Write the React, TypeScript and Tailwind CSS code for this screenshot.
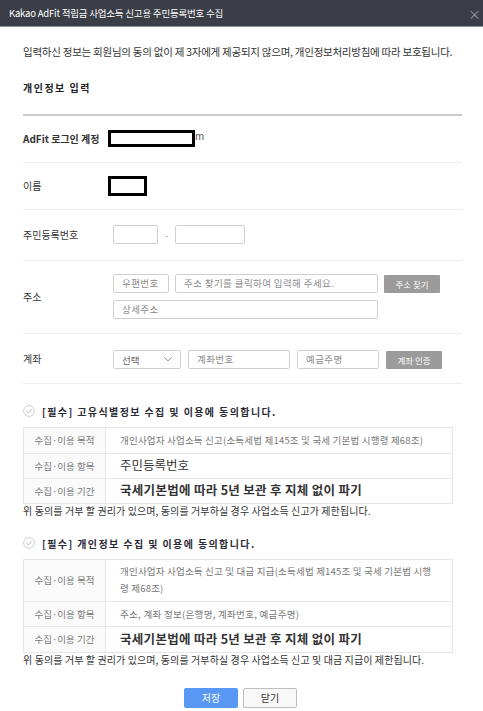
const font = { fontFamily: '"Noto Sans CJK KR", "Noto Sans", sans-serif' };

function CheckCircle() {
  return (
    <svg width="12" height="12" viewBox="0 0 12 12" className="shrink-0">
      <circle cx="6" cy="6" r="5.4" fill="white" stroke="#cfcfcf" strokeWidth="1" />
      <path d="M3.4 6.1 L5.3 7.9 L8.7 4.3" fill="none" stroke="#b5b5b5" strokeWidth="1" />
    </svg>
  );
}

function Input({ w, text }: { w: string; text?: string }) {
  return (
    <div className={`${w} h-[19px] border border-[#cfcfcf] rounded-[2px] bg-white flex items-center px-[8px] text-[9.5px] tracking-[0.4px] text-[#8a8a8a] leading-none whitespace-nowrap`}>
      {text}
    </div>
  );
}

function GrayBtn({ label }: { label: string }) {
  return (
    <div className="w-[56px] h-[18px] bg-[#9b9b9b] rounded-[1px] flex items-center justify-center text-[8.5px] text-white leading-none">
      {label}
    </div>
  );
}

function Row({ label, bold, h, children }: { label: string; bold?: boolean; h: string; children: React.ReactNode }) {
  return (
    <div className={`flex items-center ${h} border-b border-[#ededed]`}>
      <div className={`w-[90px] shrink-0 text-[10px] text-[#333] ${bold ? "font-bold" : ""}`}>{label}</div>
      <div className="flex-1">{children}</div>
    </div>
  );
}

function ConsentTable({ rows }: { rows: { label: string; h: string; content: React.ReactNode }[] }) {
  return (
    <div className="border border-[#e6e6e6] w-[430px]">
      {rows.map((r, i) => (
        <div key={i} className={`flex ${r.h} ${i > 0 ? "border-t border-[#e6e6e6]" : ""}`}>
          <div className="w-[82px] shrink-0 bg-[#fafafa] border-r border-[#e6e6e6] flex items-center justify-center text-[9.5px] text-[#777]">
            {r.label}
          </div>
          <div className="flex-1 flex items-center pl-[14px] pr-[14px]">{r.content}</div>
        </div>
      ))}
    </div>
  );
}

export default function App() {
  return (
    <div style={font} className="w-[483px] h-[711px] bg-white overflow-hidden">
      {/* header */}
      <div className="h-[27px] bg-[#3b3e47] border-b border-[#8f9197] flex items-center justify-between pl-[9px] pr-[2px]">
        <span className="text-[9.5px] text-white tracking-[-0.2px]">Kakao AdFit 적립금 사업소득 신고용 주민등록번호 수집</span>
        <span className="text-[13px] text-[#9a9ca3] leading-none">×</span>
      </div>

      <div className="pl-[23px] pr-[21px]">
        <p className="mt-[17px] text-[10.5px] text-[#333] tracking-[-0.25px]">
          입력하신 정보는 회원님의 동의 없이 제 3자에게 제공되지 않으며, 개인정보처리방침에 따라 보호됩니다.
        </p>
        <h2 className="mt-[20px] text-[10px] font-bold text-[#222] tracking-[1.5px]">개인정보 입력</h2>
        <div className="mt-[19px] h-[2px] bg-[#cacaca]" />

        <Row label="AdFit 로그인 계정" bold h="h-[47px]">
          <div className="flex items-end -ml-[5px]">
            <div className="w-[87px] h-[17px] border-[3px] border-black bg-white" />
            <span className="text-[10px] text-[#555] leading-none mb-[6px]">m</span>
          </div>
        </Row>
        <Row label="이름" h="h-[47px]">
          <div className="w-[39px] h-[20px] border-[3px] border-black bg-white -ml-[5px]" />
        </Row>
        <Row label="주민등록번호" h="h-[51px]">
          <div className="flex items-center gap-[7px]">
            <Input w="w-[45px]" />
            <span className="text-[10px] text-[#aaa]">-</span>
            <Input w="w-[70px]" />
          </div>
        </Row>
        <Row label="주소" h="h-[73px]">
          <div className="flex flex-col gap-[7px]">
            <div className="flex items-center gap-[6px]">
              <Input w="w-[56px]" text="우편번호" />
              <Input w="w-[203px]" text="주소 찾기를 클릭하여 입력해 주세요." />
              <GrayBtn label="주소 찾기" />
            </div>
            <Input w="w-[265px]" text="상세주소" />
          </div>
        </Row>
        <Row label="계좌" h="h-[50px]">
          <div className="flex items-center gap-[7px] mt-[3px]">
            <div className="w-[68px] h-[19px] border border-[#cfcfcf] rounded-[2px] flex items-center justify-between px-[8px] text-[9.5px] text-[#666]">
              <span>선택</span>
              <svg width="8" height="5" viewBox="0 0 8 5"><path d="M0.5 0.5 L4 4 L7.5 0.5" fill="none" stroke="#999" strokeWidth="1" /></svg>
            </div>
            <Input w="w-[102px]" text="계좌번호" />
            <Input w="w-[82px]" text="예금주명" />
            <GrayBtn label="계좌 인증" />
          </div>
        </Row>

        {/* consent 1 */}
        <div className="mt-[20px] h-[15px] flex items-center gap-[7px]">
          <CheckCircle />
          <span className="text-[10px] font-bold text-[#2a2a35] tracking-[1.4px]">[필수] 고유식별정보 수집 및 이용에 동의합니다.</span>
        </div>
        <div className="mt-[8px]">
          <ConsentTable
            rows={[
              { label: "수집·이용 목적", h: "h-[25px]", content: <span className="text-[9.5px] text-[#777] tracking-[0.2px] whitespace-nowrap">개인사업자 사업소득 신고(소득세법 제145조 및 국세 기본법 시행령 제68조)</span> },
              { label: "수집·이용 항목", h: "h-[25px]", content: <span className="text-[12.5px] text-[#333]">주민등록번호</span> },
              { label: "수집·이용 기간", h: "h-[25px]", content: <span className="text-[12.5px] font-bold text-[#333] tracking-[0.3px]">국세기본법에 따라 5년 보관 후 지체 없이 파기</span> },
            ]}
          />
        </div>
        <p className="text-[10px] leading-[14px] text-[#333] tracking-[0.1px]">위 동의를 거부 할 권리가 있으며, 동의를 거부하실 경우 사업소득 신고가 제한됩니다.</p>

        {/* consent 2 */}
        <div className="mt-[18px] h-[15px] flex items-center gap-[7px]">
          <CheckCircle />
          <span className="text-[10px] font-bold text-[#2a2a35] tracking-[1.4px]">[필수] 개인정보 수집 및 이용에 동의합니다.</span>
        </div>
        <div className="mt-[8px]">
          <ConsentTable
            rows={[
              { label: "수집·이용 목적", h: "h-[41px]", content: <span className="text-[9.5px] leading-[17px] text-[#777] tracking-[0.2px]">개인사업자 사업소득 신고 및 대금 지급(소득세법 제145조 및 국세 기본법 시행<br />령 제68조)</span> },
              { label: "수집·이용 항목", h: "h-[25px]", content: <span className="text-[9.5px] text-[#777] tracking-[0.3px]">주소, 계좌 정보(은행명, 계좌번호, 예금주명)</span> },
              { label: "수집·이용 기간", h: "h-[26px]", content: <span className="text-[12.5px] font-bold text-[#333] tracking-[0.3px]">국세기본법에 따라 5년 보관 후 지체 없이 파기</span> },
            ]}
          />
        </div>
        <p className="text-[10px] leading-[14px] text-[#333] tracking-[0.1px]">위 동의를 거부 할 권리가 있으며, 동의를 거부하실 경우 사업소득 신고 및 대금 지급이 제한됩니다.</p>

        <div className="mt-[21px] flex justify-center gap-[5px] pr-[4px]">
          <div className="w-[54px] h-[20px] bg-[#5897f4] rounded-[2px] flex items-center justify-center text-[10px] text-white">저장</div>
          <div className="w-[54px] h-[20px] bg-[#f8f8f8] border border-[#bdbdbd] rounded-[2px] flex items-center justify-center text-[10px] text-[#333]">닫기</div>
        </div>
      </div>
    </div>
  );
}
